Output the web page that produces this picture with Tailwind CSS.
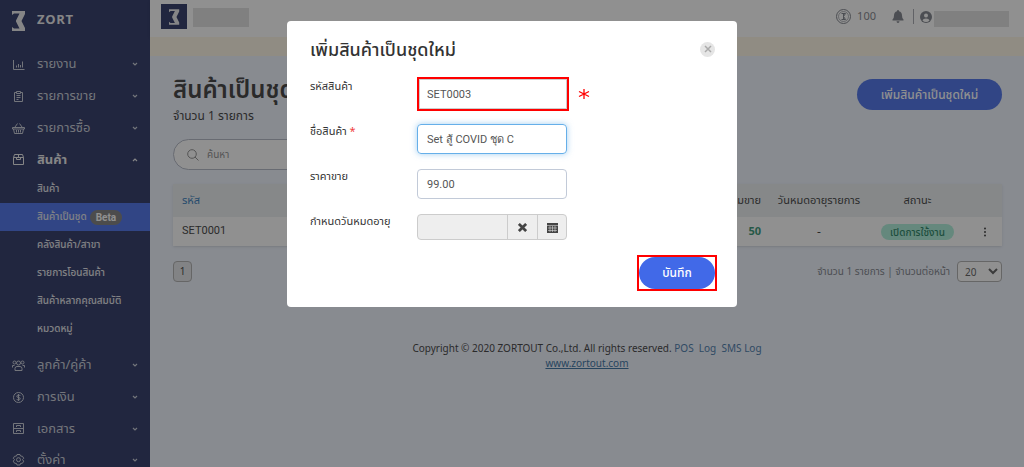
<!DOCTYPE html>
<html lang="th">
<head>
    <meta charset="UTF-8">
    <meta name="viewport" content="width=device-width, initial-scale=1.0">
    <title>ZORT - สินค้าเป็นชุด</title>
    <!-- Tailwind CSS -->
    <script src="https://cdn.jsdelivr.net/npm/@tailwindcss/browser@4"></script>
</head>
<body class="h-screen overflow-hidden bg-[#eef4ff] font-['Noto_Sans','Noto_Sans_Thai',sans-serif] text-[#333333] text-xs">

    <!-- SVG symbols -->
    <svg class="hidden">
        <symbol id="logo" viewBox="0 0 14 20">
            <path d="M0 0h13v3L9.500 10l3.500 7v3H0v-4l2 1.500h5.500L4 10.500v-1L7.500 2.500H2L0 4z" fill="currentColor"/>
        </symbol>
        <symbol id="down" viewBox="0 0 8 8"><path d="M2 3l2 2 2-2" fill="none" stroke="currentColor" stroke-width="1.200"/></symbol>
        <symbol id="up" viewBox="0 0 8 8"><path d="M2 5l2-2 2 2" fill="none" stroke="currentColor" stroke-width="1.200"/></symbol>
    </svg>

    <div class="flex h-full">
        <!-- Sidebar -->
        <nav class="w-[150px] shrink-0 overflow-hidden bg-[#202a5c] text-[#c4c8d4]">
            <div class="flex h-12 items-start gap-[11px] pl-3 pt-[11px]">
                <svg class="h-5 w-[14px] text-[#e8e8ea]"><use href="#logo"/></svg>
                <span class="font-['Open_Sans'] text-[13px] font-bold leading-4 tracking-wider text-[#e8e8ea]">ZORT</span>
            </div>
            <ul class="text-[13px]">
                <li>
                    <a href="#" class="flex h-8 items-center gap-3 pl-3 pr-[11px]">
                        <svg class="h-[13px] w-[13px]" viewBox="0 0 13 13" fill="none" stroke="currentColor"><path d="M1.500 2v9.500h11M4.500 9.500v-2M6.500 9.500V6M8.500 9.500V7M10.500 9.500V3.500"/></svg>
                        <span class="flex-1">รายงาน</span><svg class="h-2 w-2"><use href="#down"/></svg>
                    </a>
                </li>
                <li>
                    <a href="#" class="flex h-8 items-center gap-3 pl-3 pr-[11px]">
                        <svg class="h-[13px] w-[13px]" viewBox="0 0 13 13" fill="none" stroke="currentColor"><path d="M4.500 2.500h-2v9h8v-9h-2M4.500 1.500h4v2h-4zM4.500 5.500h4M4.500 7.500h4M4.500 9.500h2"/></svg>
                        <span class="flex-1">รายการขาย</span><svg class="h-2 w-2"><use href="#down"/></svg>
                    </a>
                </li>
                <li>
                    <a href="#" class="flex h-8 items-center gap-3 pl-3 pr-[11px]">
                        <svg class="h-[13px] w-[13px]" viewBox="0 0 13 13" fill="none" stroke="currentColor"><path d="M.5 5.500h12v1.500H.5zM1.500 7l1 4.500h8l1-4.500M3 5l2.500-3.500M10 5L7.500 1.500M4.500 8v2.500M6.500 8v2.500M8.500 8v2.500"/></svg>
                        <span class="flex-1">รายการซื้อ</span><svg class="h-2 w-2"><use href="#down"/></svg>
                    </a>
                </li>
                <li>
                    <a href="#" class="flex h-[31px] items-center gap-3 pl-3 pr-[11px] font-bold text-[#e8e8ea]">
                        <svg class="h-[13px] w-[13px]" viewBox="0 0 13 13" fill="none" stroke="currentColor"><path d="M1.500 4.500l1-3h8l1 3v7h-10zM1.500 4.500h10M6.500 1.500v3M4.500 4.500v2h4v-2"/></svg>
                        <span class="flex-1">สินค้า</span><svg class="h-2 w-2"><use href="#up"/></svg>
                    </a>
                    <ul class="mb-[6px] text-[10px] font-medium text-[#e0e2e8]">
                        <li><a href="#" class="flex h-7 items-center pl-[37px]">สินค้า</a></li>
                        <li><a href="#" class="flex h-7 items-center gap-[3px] bg-[#4169e8] pl-[37px]">สินค้าเป็นชุด <span class="rounded-full bg-[#777777] px-[6px] font-['Roboto'] font-bold leading-[15px] text-white">Beta</span></a></li>
                        <li><a href="#" class="flex h-7 items-center pl-[37px]">คลังสินค้า/สาขา</a></li>
                        <li><a href="#" class="flex h-7 items-center pl-[37px]">รายการโอนสินค้า</a></li>
                        <li><a href="#" class="flex h-7 items-center pl-[37px]">สินค้าหลากคุณสมบัติ</a></li>
                        <li><a href="#" class="flex h-7 items-center pl-[37px]">หมวดหมู่</a></li>
                    </ul>
                </li>
                <li>
                    <a href="#" class="flex h-8 items-center gap-3 pl-3 pr-[11px]">
                        <svg class="h-[13px] w-[13px]" viewBox="0 0 13 13" fill="none" stroke="currentColor"><circle cx="2.500" cy="3.500" r="1.500"/><circle cx="6.500" cy="4" r="2"/><circle cx="10.500" cy="3.500" r="1.500"/><path d="M3 11.500V9.500Q3 7.500 5 7.500h3q2 0 2 2v2zM.5 8.500V6.500h2M12.500 8.500V6.500h-2"/></svg>
                        <span class="flex-1">ลูกค้า/คู่ค้า</span><svg class="h-2 w-2"><use href="#down"/></svg>
                    </a>
                </li>
                <li>
                    <a href="#" class="flex h-8 items-center gap-3 pl-3 pr-[11px]">
                        <svg class="h-[13px] w-[13px]" viewBox="0 0 13 13" fill="none" stroke="currentColor"><circle cx="6.500" cy="6.500" r="5"/><path d="M8.500 5Q8 4 6.500 4T4.800 5.200t1.700 1.300 1.700 1.300T6.500 9 4.500 8M6.500 3v7"/></svg>
                        <span class="flex-1">การเงิน</span><svg class="h-2 w-2"><use href="#down"/></svg>
                    </a>
                </li>
                <li>
                    <a href="#" class="flex h-[31px] items-center gap-3 pl-3 pr-[11px]">
                        <svg class="h-[13px] w-[13px]" viewBox="0 0 13 13" fill="none" stroke="currentColor"><path d="M1.500 1.500h10v10h-10zM1.500 6.500h10M4.500 5V3.500h4V5M4.500 10V8.500h4V10"/></svg>
                        <span class="flex-1">เอกสาร</span><svg class="h-2 w-2"><use href="#down"/></svg>
                    </a>
                </li>
                <li>
                    <a href="#" class="flex h-[31px] items-center gap-3 pl-3 pr-[11px]">
                        <svg class="h-[13px] w-[13px]" viewBox="0 0 13 13" fill="none" stroke="currentColor"><path d="M5 1.500h3l.5 1.500 2 .3 1.200 2L10.500 6.500l1.200 1.700-1.200 2-2 .3L8 12H5l-.5-1.500-2-.3-1.200-2 1.200-1.700-1.200-1.200 1.200-2 2-.3z"/><circle cx="6.500" cy="6.700" r="2"/></svg>
                        <span class="flex-1">ตั้งค่า</span><svg class="h-2 w-2"><use href="#down"/></svg>
                    </a>
                </li>
            </ul>
        </nav>

        <!-- Main content -->
        <div class="flex-1">
            <header class="flex h-[37px] items-center bg-white pb-1 pl-[11px] pr-[15px] shadow-sm">
                <div class="flex h-[25px] w-[26px] items-center justify-center bg-[#202a5c] text-[#e8e8ea]"><svg class="h-4 w-[11px]"><use href="#logo"/></svg></div>
                <div class="ml-[6px] mt-[2px] h-[19px] w-14 bg-[#dedede]"></div>
                <div class="ml-auto flex items-center text-[#777b84]">
                    <svg class="h-[15px] w-[15px]" viewBox="0 0 15 15" fill="none" stroke="currentColor"><circle cx="7.500" cy="7.500" r="7"/><circle cx="7.500" cy="7.500" r="5" stroke-width=".6"/><path d="M5.500 4.500h4L7.500 7.500l2 3h-4M7.500 4.500v6"/></svg>
                    <span class="ml-[6px] text-[11px]">100</span>
                    <svg class="ml-4 h-[13px] w-3" viewBox="0 0 12 13" fill="currentColor"><path d="M6 0q1 0 1 1.200Q10 2 10 5.500q0 3 1.500 4v1H.5v-1Q2 8.500 2 5.500 2 2 5 1.200 5 0 6 0zM4.500 11.300h3Q7.500 13 6 13t-1.500-1.700z"/></svg>
                    <span class="ml-[9px] h-[15px] border-l border-[#a0a3aa]"></span>
                    <svg class="ml-[6px] h-3 w-3" viewBox="0 0 12 12"><circle cx="6" cy="6" r="6" fill="currentColor"/><circle cx="6" cy="4.500" r="2" fill="#ffffff"/><path d="M2.500 9.500Q3 7.500 6 7.500t3.500 2Q8 11 6 11T2.500 9.500z" fill="#ffffff"/></svg>
                    <span class="ml-[2px] mt-1 h-4 w-[75px] bg-[#dedede]"></span>
                </div>
            </header>
            <div class="h-[19px] bg-[#fff7e4]"></div>

            <main class="pl-[23px] pr-[22px] pt-[15px]">
                <div class="flex justify-between">
                    <div>
                        <h1 class="whitespace-nowrap text-2xl font-semibold leading-[36px]">สินค้าเป็นชุด</h1>
                        <p class="mt-px text-xs leading-4">จำนวน 1 รายการ</p>
                    </div>
                    <button class="mt-2 h-[31px] w-[145px] rounded-full bg-[#4169e8] text-xs font-medium text-white">เพิ่มสินค้าเป็นชุดใหม่</button>
                </div>

                <label class="mt-[15px] flex h-[31px] w-[340px] items-center gap-2 rounded-full border border-[#aeb4c2] bg-white pl-[13px] text-[#888888]">
                    <svg class="h-3 w-3" viewBox="0 0 12 12" fill="none" stroke="currentColor"><circle cx="5" cy="5" r="4.300"/><path d="M8 8l3.500 3.500"/></svg>
                    <input type="search" placeholder="ค้นหา" aria-label="ค้นหา" class="text-[10px] outline-none placeholder:text-[#888888]">
                </label>

                <!-- Product sets -->
                <table class="mt-[14px] w-full table-fixed bg-white shadow-sm">
                    <thead class="bg-[#eaeef0] text-[11px]">
                        <tr class="h-[33px]">
                            <th class="pl-[9px] text-left font-normal text-[#2874b8]">รหัส</th>
                            <th class="w-24 pr-[9px] text-right font-normal">พร้อมขาย</th>
                            <th class="w-[98px] whitespace-nowrap font-normal">วันหมดอายุรายการ</th>
                            <th class="w-[99px] font-normal">สถานะ</th>
                            <th class="w-[35px]"></th>
                        </tr>
                    </thead>
                    <tbody>
                        <tr class="h-[29px]">
                            <td class="pl-[9px] font-['Roboto'] text-[11px]">SET0001</td>
                            <td class="pr-[9px] text-right text-[11px] font-bold text-[#2a8f6d]">50</td>
                            <td class="text-center">-</td>
                            <td class="text-center"><span class="inline-block rounded-full bg-[#a9efd8] px-[9px] text-[10px] font-medium leading-4 text-[#187b5b]">เปิดการใช้งาน</span></td>
                            <td class="text-center"><button aria-label="เมนู" class="align-middle"><svg class="h-3 w-3" viewBox="0 0 12 12" fill="currentColor"><circle cx="6" cy="2.500" r="1"/><circle cx="6" cy="6" r="1"/><circle cx="6" cy="9.500" r="1"/></svg></button></td>
                        </tr>
                    </tbody>
                </table>

                <div class="mt-[15px] flex items-center justify-between">
                    <button class="h-[21px] w-[19px] rounded-sm border border-[#aaaaaa] bg-[#e2e5e8] text-[10px]">1</button>
                    <label class="flex items-center gap-[7px] text-[10px] text-[#777b84]">จำนวน 1 รายการ | จำนวนต่อหน้า
                        <select class="h-[21px] w-[45px] rounded-sm border border-[#aaaaaa] bg-white pl-[3px] text-[10px] text-[#555555]"><option>20</option></select>
                    </label>
                </div>
            </main>

            <footer class="mt-[59px] text-center text-[10px] leading-[15px]">
                <p>Copyright © 2020 ZORTOUT Co.,Ltd. All rights reserved. <a href="#" class="text-[#3b73a5]">POS</a> &nbsp;<a href="#" class="text-[#3b73a5]">Log</a> &nbsp;<a href="#" class="text-[#3b73a5]">SMS Log</a></p>
                <a href="#" class="text-[#2d689c] underline">www.zortout.com</a>
            </footer>
        </div>
    </div>

    <!-- Modal -->
    <div class="fixed inset-0 flex items-start justify-center bg-[#222222]/50 pt-[21px]">
        <form role="dialog" aria-labelledby="dialog-title" class="w-[450px] rounded bg-white pb-4 pl-[23px] pr-5">
            <div class="flex h-14 items-center justify-between">
                <h2 id="dialog-title" class="text-lg font-medium">เพิ่มสินค้าเป็นชุดใหม่</h2>
                <button type="button" aria-label="ปิด" class="mr-[2px] flex h-[15px] w-[15px] items-center justify-center rounded-full bg-[#e5e5e5] text-[#aaaaaa]">
                    <svg class="h-2 w-2" viewBox="0 0 8 8" stroke="currentColor" stroke-width="1.500"><path d="M1 1l6 6M7 1L1 7"/></svg>
                </button>
            </div>

            <div class="flex text-[11px]">
                <label for="code" class="w-[107px] pt-[2px]">รหัสสินค้า</label>
                <div class="border-2 border-[#ff0000]"><input id="code" value="SET0003" class="block h-[30px] w-[148px] border border-[#cccccc] px-[7px] font-['Roboto'] text-[#555555] outline-none"></div>
                <svg class="ml-[9px] mt-[11px] h-3 w-3 text-[#ff0000]" viewBox="0 0 12 12" stroke="currentColor" stroke-width="1.300"><path d="M6 1v10M1 3.500l10 5M11 3.500l-10 5"/></svg>
            </div>
            <div class="mt-[13px] flex text-[11px]">
                <label for="name" class="w-[107px]">ชื่อสินค้า <span class="text-[#f04040]">*</span></label>
                <input id="name" value="Set สู้ COVID ชุด C" class="h-[30px] w-[150px] rounded-sm border border-[#66afe9] px-[9px] font-['Roboto'] text-[#555555] shadow-[0_0_6px_#66afe999] outline-none">
            </div>
            <div class="mt-[15px] flex text-[11px]">
                <label for="price" class="w-[107px]">ราคาขาย</label>
                <input id="price" value="99.00" class="h-[30px] w-[150px] rounded-sm border border-[#c2cad8] px-[9px] font-['Roboto'] text-[#555555] outline-none">
            </div>
            <div class="mt-[15px] flex text-[11px]">
                <label for="expire" class="w-[107px]">กำหนดวันหมดอายุ</label>
                <div class="flex h-[26px] w-[150px] overflow-hidden rounded-sm border border-[#cccccc] bg-[#eeeeee]">
                    <input id="expire" readonly class="min-w-0 flex-1">
                    <button type="button" aria-label="ล้างวันที่" class="flex w-[30px] items-center justify-center border-l border-[#cccccc] text-[#444444]"><svg class="h-[9px] w-[9px]" viewBox="0 0 10 10" stroke="currentColor" stroke-width="3"><path d="M1 1l8 8M9 1L1 9"/></svg></button>
                    <button type="button" aria-label="เลือกวันที่" class="flex w-[29px] items-center justify-center border-l border-[#cccccc] text-[#444444]"><svg class="h-[11px] w-[11px]" viewBox="0 0 11 11"><path d="M0 1h11v10H0z" fill="currentColor"/><path d="M0 3.500h11M1 6h9M1 8.500h9M3 4v6M5.500 4v6M8 4v6" stroke="#eeeeee" stroke-width=".5"/></svg></button>
                </div>
            </div>

            <div class="mt-[15px] flex justify-end">
                <div class="border-2 border-[#ff0000]"><button type="submit" class="block h-8 w-[76px] rounded-full bg-[#4169e8] text-xs font-medium text-white">บันทึก</button></div>
            </div>
        </form>
    </div>

</body>
</html>
